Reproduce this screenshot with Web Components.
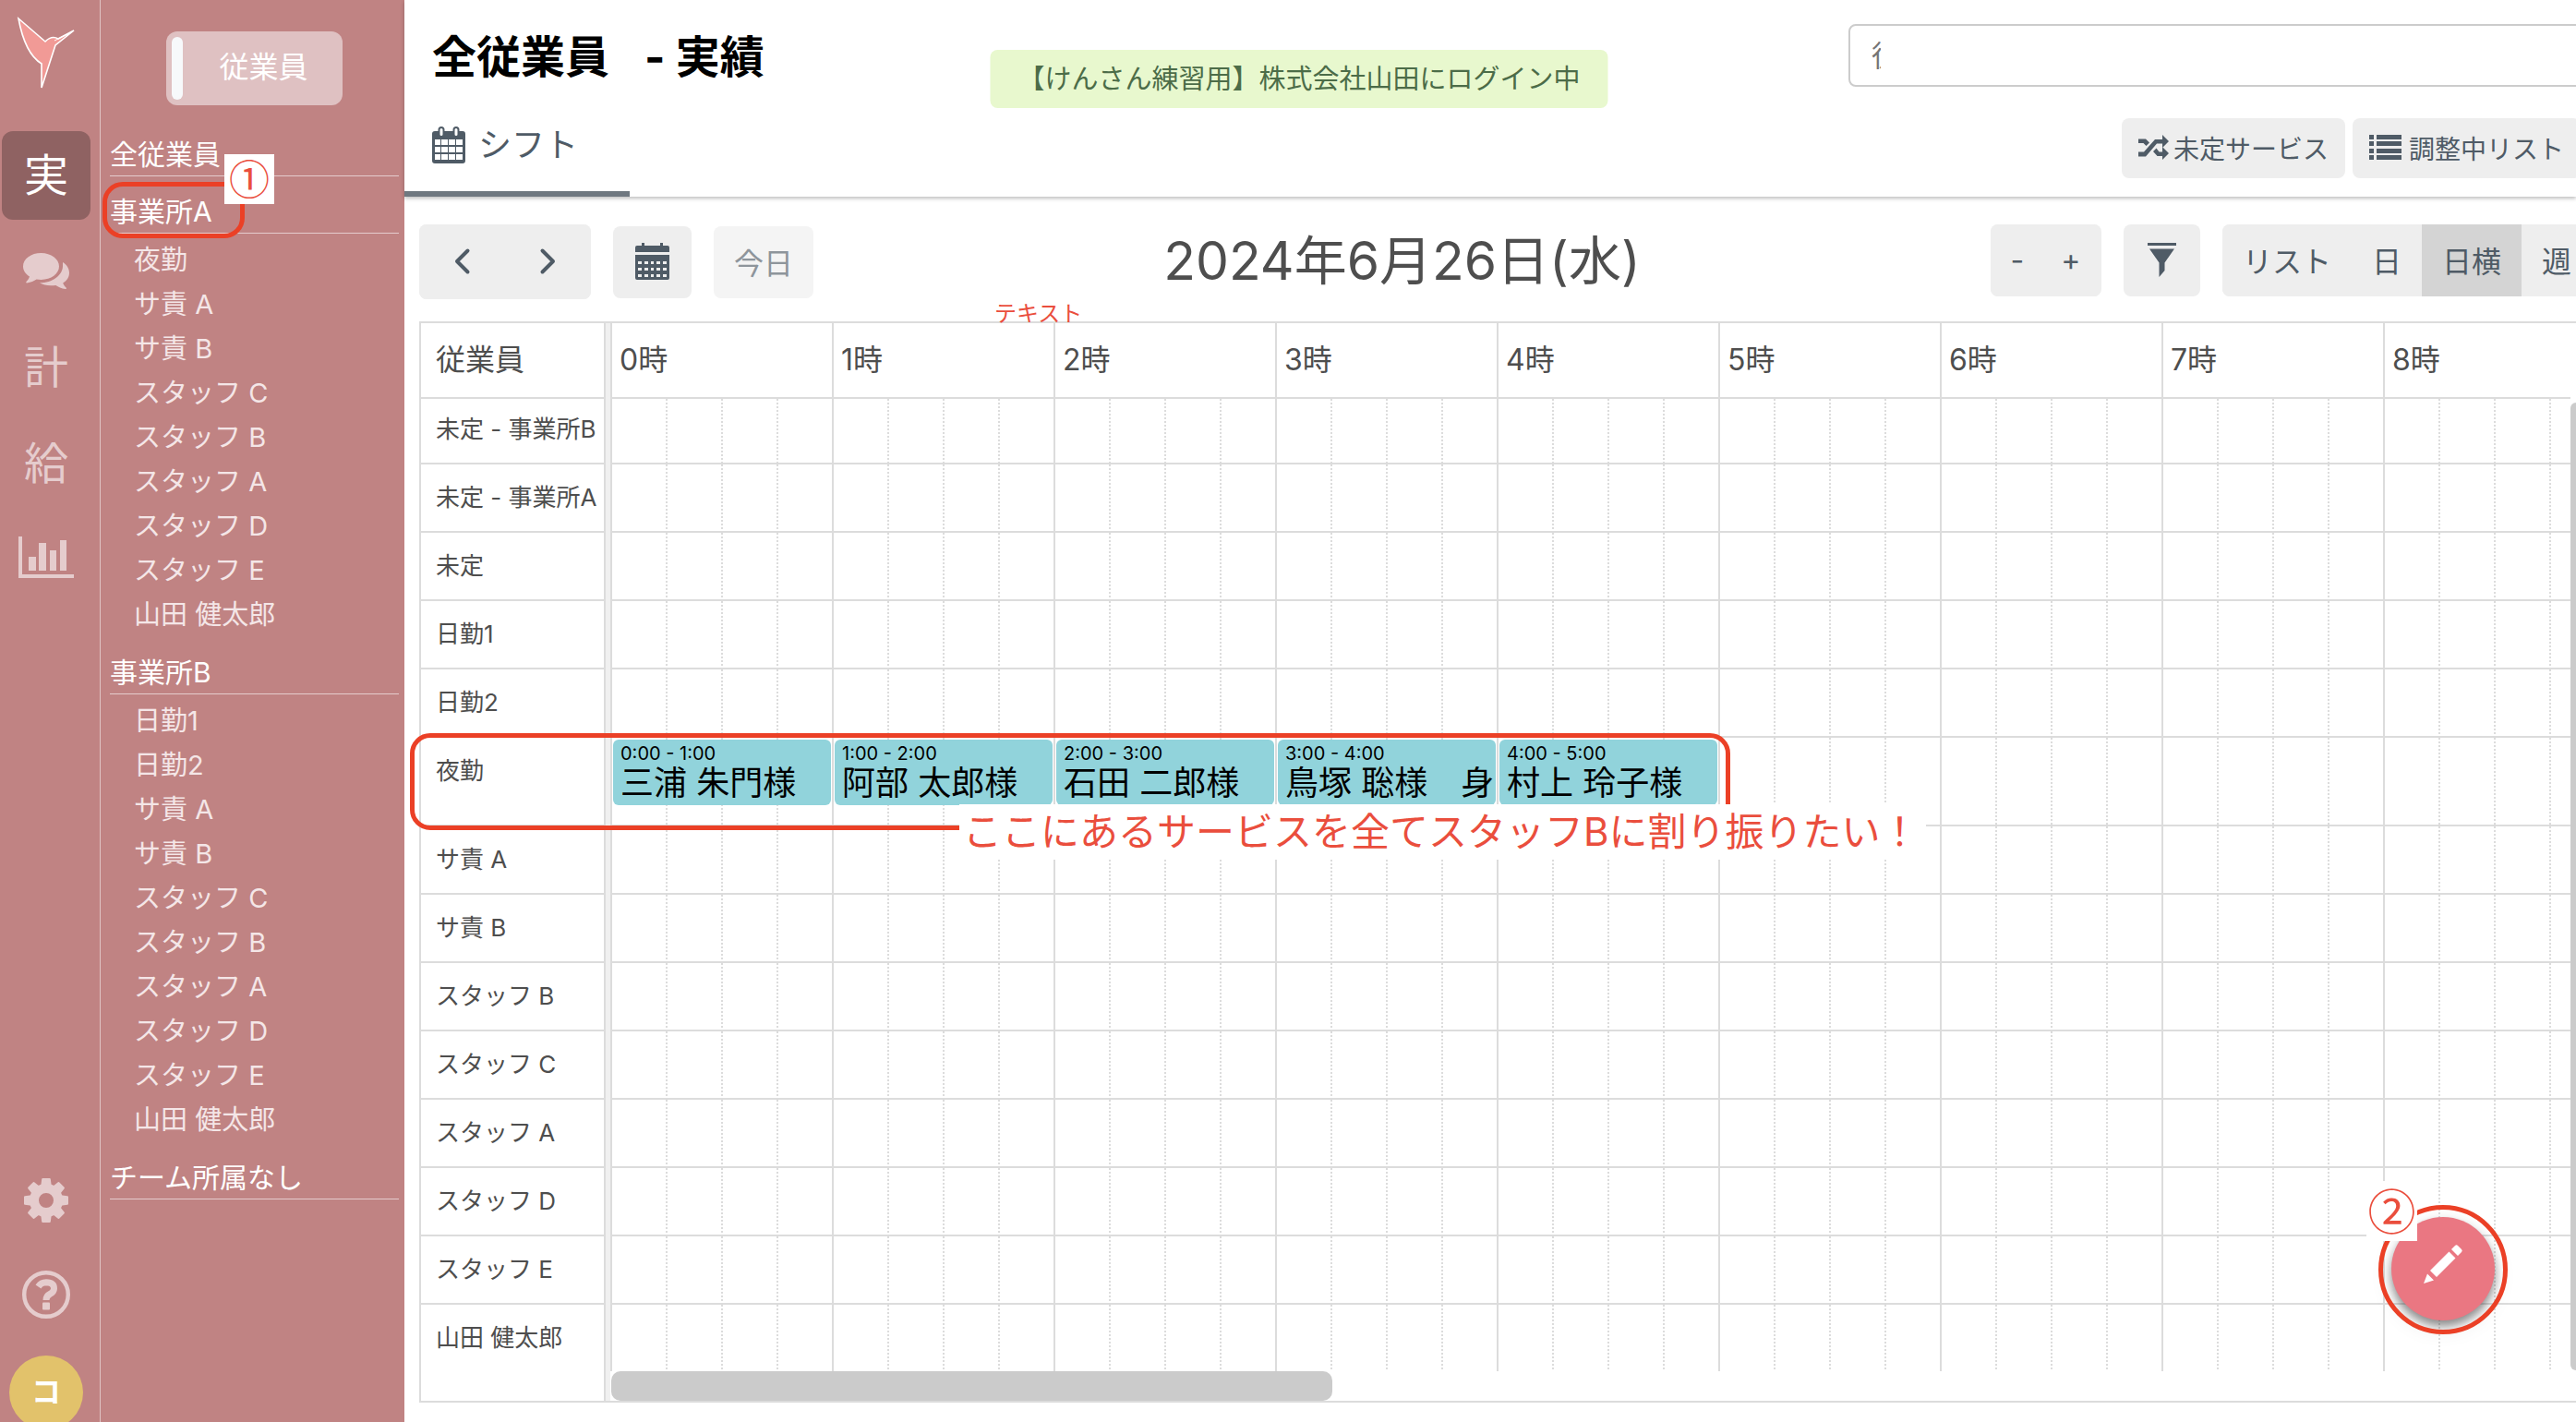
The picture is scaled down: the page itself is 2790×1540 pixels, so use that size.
<!DOCTYPE html>
<html lang="ja">
<head>
<meta charset="utf-8">
<title>全従業員 - 実績</title>
<style>
  html, body { margin: 0; height: 100%; }
  body {
    font-family: Inter, "Noto Sans CJK JP", sans-serif;
    color: #4e4e4e;
    background: #fff;
    overflow: hidden;
    --line: #dcdcdc;
    --btn: #eee;
    --ink: #4f5b66;
    --mark: #eb4026;
    --note: #ea4e3d;
  }
</style>
</head>
<body>
<care-app></care-app>
<script>
const ICONS = {
  bird: ['0 0 62 80', '<path d="M1 2 30 27Q37 20 44 24L61 15 41 31 26 77V51Q8 40 1 2Z" fill="#f19a96" stroke="#fff" stroke-width="1.6"/><path d="M40 26 58 17" stroke="#fff" stroke-width="1"/>'],
  comments: ['0 0 50 40', '<path d="M19.500 0C8.700 0 0 6.300 0 14.500c0 4.600 2.800 8.400 7 11-.6 2.300-1.900 4-3.500 5.600-.6.700-.1 1.400.6 1.300 4.300-.5 7.800-2.100 10.400-3.900 1.600.3 3.300.4 5 .4C30.300 28.900 39 22.500 39 14.500S30.300 0 19.500 0Z"/><path d="M43 10c4.300 2.500 7 6.700 7 11.500 0 4.700-2.800 8.700-6.800 11 .7 2.200 2 3.600 3.400 5.100.7.800.2 1.600-.8 1.500-4.200-.6-7.700-2.300-10.400-4.200-7 1-13.400 0-17.400-2.600C31 32.500 43 24.500 43 14Z"/>'],
  chart: ['0 0 60 50', '<path d="M0 0h4v41h56v4H0ZM11 22h8v15h-8ZM22 7h8v30h-8ZM34 15h7v22h-7ZM45 4h7v33h-7Z"/>'],
  gear: ['0 0 48 48', '<g><circle cx="24" cy="24" r="13" fill="none" stroke="currentColor" stroke-width="10"/>' +
    [0, 45, 90, 135, 180, 225, 270, 315].map(a => `<path d="M17 9 18.500 6.500 19.200 1Q19.300 0 20.300 0h7.400Q28.700 0 28.800 1L29.500 6.500 31 9Z" transform="rotate(${a} 24 24)"/>`).join('') + '</g>'],
  help: ['0 0 52 56', '<circle cx="26" cy="26" r="23.800" fill="none" stroke="currentColor" stroke-width="4.400"/><path d="M17.500 17.500Q20.500 12.800 26 12.800 34.500 13 34.500 19.500 34.500 23 30 25.500 26 27.500 26 32" fill="none" stroke="currentColor" stroke-width="7"/><rect x="22" y="34.500" width="8" height="8" rx="1"/>'],
  calendar: ['0 0 36 40', '<path fill-rule="evenodd" d="M3 5h30q3 0 3 3v29q0 3-3 3H3q-3 0-3-3V8q0-3 3-3ZM3 14v6h6v-6Zm7 0v6h7v-6Zm8 0v6h7v-6Zm8 0v6h7v-6ZM3 22v6h6v-6Zm7 0v6h7v-6Zm8 0v6h7v-6Zm8 0v6h7v-6ZM3 30v6h6v-6Zm7 0v6h7v-6Zm8 0v6h7v-6Zm8 0v6h7v-6Z"/><rect x="7.500" y="1" width="5" height="10" rx="2.500" fill="#fff" stroke="currentColor" stroke-width="2"/><rect x="23.500" y="1" width="5" height="10" rx="2.500" fill="#fff" stroke="currentColor" stroke-width="2"/>'],
  month: ['0 0 37 40', '<path fill-rule="evenodd" d="M7 0h3v3h17V0h3v3h5q2 0 2 2v5H0V5q0-2 2-2h5ZM0 13h37v25q0 2-2 2H2q-2 0-2-2ZM3 20v3h4v-3Zm7 0v3h4v-3Zm7 0v3h3v-3Zm6 0v3h4v-3Zm7 0v3h4v-3ZM3 27v3h4v-3Zm7 0v3h4v-3Zm7 0v3h3v-3Zm6 0v3h4v-3Zm7 0v3h4v-3ZM3 34v3h4v-3Zm7 0v3h4v-3Zm7 0v3h3v-3Zm6 0v3h4v-3Zm7 0v3h4v-3Z"/>'],
  prev: ['0 0 17 28', '<path d="M14.500 2.500 3 14l11.500 11.500" fill="none" stroke="currentColor" stroke-width="4" stroke-linecap="round" stroke-linejoin="round"/>'],
  next: ['0 0 17 28', '<path d="M2.500 2.500 14 14 2.500 25.500" fill="none" stroke="currentColor" stroke-width="4" stroke-linecap="round" stroke-linejoin="round"/>'],
  filter: ['0 0 31 37', '<path d="M0 0h31v3H0ZM2 6.500h27L18.500 21.500V30L12.500 37V21.500Z"/>'],
  shuffle: ['0 0 33 27', '<path d="M0 4.500h8l4 4-3.500 3.500-3-3H0ZM0 18.500h6L18 5h8V0l7 7-7 7V9.500h-6L8 23.500H0ZM16 18l3.500-3.500 3 4H26V13l7 7-7 7v-4h-5.500Z"/>'],
  list: ['0 0 35 27', '<path d="M0 0h5v5H0ZM8 0h27v5H8ZM0 7h5v5H0ZM8 7h27v5H8ZM0 15h5v5H0ZM8 15h27v5H8ZM0 22h5v5H0ZM8 22h27v5H8Z"/>'],
  pencil: ['0 0 42 42', '<path d="M0 42 4 31.500 11 38.500ZM7 28 27.500 7.500 34.500 14.500 14 35ZM30 5 34 1Q35.500-.5 37 1L41 5Q42.500 6.500 41 8L37 12Z"/>']
};

/* Registers an element whose shadow root is cloned from a template. */
function define(name, html, setup) {
  const template = document.createElement('template');
  template.innerHTML = html;
  customElements.define(name, class extends HTMLElement {
    constructor() {
      super();
      this.attachShadow({ mode: 'open' }).append(template.content.cloneNode(true));
    }
    connectedCallback() {
      if (setup && !this.ready) { this.ready = true; setup(this, this.shadowRoot); }
    }
  });
}

define('ui-icon', `<style>
  :host { display: block; flex: none; line-height: 0; }
  svg { display: block; fill: currentColor; overflow: visible; }
</style><span></span>`, (el, root) => {
  const [box, body] = ICONS[el.getAttribute('name')];
  const [, , w, h] = box.split(' ');
  root.querySelector('span').innerHTML = `<svg width="${w}" height="${h}" viewBox="${box}" aria-hidden="true">${body}</svg>`;
});

define('ui-button', `<style>
  :host { display: block; flex: none; }
  button {
    display: flex; align-items: center; justify-content: center; gap: var(--gap, 0);
    box-sizing: border-box; width: 100%; height: var(--h, 78px); margin: 0; padding: 0 var(--pad, 22px) 2px;
    border: 0; border-radius: var(--radius, 8px); background: var(--btn);
    color: var(--ink); font: inherit; font-size: var(--size, 32px); white-space: nowrap;
  }
  :host([active]) button { background: #d4d4d4; }
  :host([disabled]) button { background: #f4f4f4; color: #8e959b; }
</style><button type="button"><slot></slot></button>`, (el, root) => {
  const label = el.getAttribute('label');
  if (label) root.querySelector('button').setAttribute('aria-label', label);
  root.querySelector('button').disabled = el.hasAttribute('disabled');
});

define('ui-button-group', `<style>
  :host { display: flex; flex: none; overflow: hidden; border-radius: 8px; background: var(--btn); --radius: 0; }
</style><slot></slot>`);

define('rail-item', `<style>
  :host { display: block; }
  a {
    display: flex; align-items: center; justify-content: center; width: 96px; height: 96px;
    border-radius: 12px; color: #e5cccd; font-size: 48px; line-height: 96px; text-decoration: none;
  }
  :host([active]) a { background: #8f6262; color: #fff; }
</style><a href="#"><slot></slot></a>`);

define('nav-rail', `<style>
  :host { display: flex; flex-direction: column; flex: none; gap: 8px; width: 106px; padding: 18px 0 0 2px; border-right: 1px solid #e0c4c4; }
  .logo { padding-left: 17px; height: 116px; }
  .space { flex: 1; }
  .avatar {
    flex: none; width: 80px; height: 80px; margin: 8px 0 -8px 8px; padding: 0; border: 0; border-radius: 50%;
    background: #e2c26b; color: #fff; font: inherit; font-size: 32px; font-weight: 700; line-height: 80px;
  }
</style>
<div class="logo"><ui-icon name="bird"></ui-icon></div>
<rail-item active>実</rail-item>
<rail-item><ui-icon name="comments"></ui-icon></rail-item>
<rail-item>計</rail-item>
<rail-item>給</rail-item>
<rail-item><ui-icon name="chart"></ui-icon></rail-item>
<div class="space"></div>
<rail-item><ui-icon name="gear"></ui-icon></rail-item>
<rail-item><ui-icon name="help"></ui-icon></rail-item>
<button class="avatar" type="button">コ</button>`);

define('staff-group', `<style>
  :host { display: block; }
  h2 { margin: 0; padding: 16px 0 1px; border-bottom: 1px solid #e5cccd; font-size: 30px; font-weight: 400; line-height: 44px; }
  ul { margin: 0; padding: 5px 0 0 26px; list-style: none; }
  li { font-size: 29px; line-height: 48px; }
  a { color: #fff; text-decoration: none; }
  li a { color: #f4e6e7; }
</style><h2><a href="#"></a></h2>`, (el, root) => {
  root.querySelector('h2 a').textContent = el.getAttribute('name');
  const members = el.getAttribute('members');
  if (!members) return;
  const ul = document.createElement('ul');
  for (const m of members.split(',')) {
    const li = document.createElement('li'), a = document.createElement('a');
    a.href = '#'; a.textContent = m; li.append(a); ul.append(li);
  }
  root.append(ul);
});

define('staff-panel', `<style>
  :host { display: block; flex: none; box-sizing: border-box; width: 329px; padding: 34px 6px 0 10px; }
  .switch {
    display: flex; align-items: center; width: 191px; height: 80px; margin: 0 0 15px 61px; padding: 0 0 0 6px;
    border: 0; border-radius: 12px; background: #dfc1c2; color: #fff; font: inherit; font-size: 32px; line-height: 76px;
  }
  .switch i { width: 12px; height: 68px; border-radius: 6px; background: #f7f9fb; }
  .switch span { flex: 1; text-align: center; padding: 0 0 2px 2px; }
</style>
<button class="switch" type="button"><i></i><span>従業員</span></button>
<staff-group name="全従業員"></staff-group>
<staff-group name="事業所A" members="夜勤,サ責 A,サ責 B,スタッフ C,スタッフ B,スタッフ A,スタッフ D,スタッフ E,山田 健太郎"></staff-group>
<staff-group name="事業所B" members="日勤1,日勤2,サ責 A,サ責 B,スタッフ C,スタッフ B,スタッフ A,スタッフ D,スタッフ E,山田 健太郎"></staff-group>
<staff-group name="チーム所属なし"></staff-group>`);

define('staff-search', `<style>
  :host { display: block; }
  label { display: flex; box-sizing: border-box; height: 68px; padding-left: 23px; border: 2px solid #ccc; border-radius: 8px; }
  input { width: 10px; height: 64px; padding: 0; border: 0; outline: 0; background: none; font: inherit; font-size: 32px; }
  input::placeholder { color: #757575; opacity: 1; }
</style><label><input type="text" placeholder="従" aria-label="従業員検索"></label>`);

define('page-header', `<style>
  :host { display: block; box-shadow: 0 2px 4px rgba(0,0,0,.26); }
  .top { display: flex; justify-content: space-between; height: 120px; padding-left: 30px; }
  h1 { display: flex; gap: 38px; margin: 0; padding-top: 32px; color: #000; font-size: 48px; font-weight: 700; line-height: 60px; }
  staff-search { width: 812px; margin: 26px -24px 0 0; }
  .bottom { display: flex; justify-content: space-between; height: 93px; }
  .tab {
    display: flex; align-items: center; gap: 14px; box-sizing: border-box; width: 244px; padding: 0 0 14px 30px;
    border-bottom: 6px solid #6f7880; color: var(--ink); font-size: 36px; line-height: 72px; text-decoration: none;
  }
  .actions { display: flex; gap: 8px; margin: 8px -5px 0 0; --h: 65px; --size: 28px; --pad: 18px; }
  .wide { --gap: 8px; }
  .tight { --gap: 5px; }
</style>
<div class="top"><h1><span>全従業員</span><span>- 実績</span></h1><staff-search></staff-search></div>
<div class="bottom">
  <a class="tab" href="#"><ui-icon name="calendar"></ui-icon>シフト</a>
  <div class="actions">
    <ui-button class="tight"><ui-icon name="shuffle"></ui-icon>未定サービス</ui-button>
    <ui-button class="wide"><ui-icon name="list"></ui-icon>調整中リスト</ui-button>
  </div>
</div>`);

define('shift-toolbar', `<style>
  :host { display: flex; justify-content: space-between; align-items: flex-start; height: 105px; padding: 30px 0 0 16px; }
  .side { display: flex; align-items: center; gap: 24px; }
  .right { margin-right: -17px; }
  .nav { --h: 81px; --pad: 38px; }
  .month { --pad: 24px; }
  h2 { margin: 0; font-size: 57px; font-weight: 400; line-height: 80px; }
  .zoom { --pad: 0; padding-right: 4px; }
  .zoom ui-button { width: 58px; }
  .filter { --pad: 26px; }
</style>
<div class="side">
  <ui-button-group class="nav">
    <ui-button label="前の日"><ui-icon name="prev"></ui-icon></ui-button>
    <ui-button label="次の日"><ui-icon name="next"></ui-icon></ui-button>
  </ui-button-group>
  <ui-button class="month" label="日付を選択"><ui-icon name="month"></ui-icon></ui-button>
  <ui-button disabled>今日</ui-button>
</div>
<h2>2024年6月26日(水)</h2>
<div class="side right">
  <ui-button-group class="zoom"><ui-button>-</ui-button><ui-button>+</ui-button></ui-button-group>
  <ui-button class="filter" label="絞り込み"><ui-icon name="filter"></ui-icon></ui-button>
  <ui-button-group>
    <ui-button>リスト</ui-button><ui-button>日</ui-button><ui-button active>日横</ui-button><ui-button>週</ui-button>
  </ui-button-group>
</div>`);

define('shift-event', `<style>
  :host { display: block; margin: 2px 1px 0; }
  button {
    display: block; width: 100%; height: 71px; margin: 0; padding: 2px 0 0 8px; overflow: hidden;
    border: 0; border-radius: 6px; background: #91d3db; color: #000; font: inherit; text-align: left; white-space: nowrap;
  }
  time { display: block; font-size: 20px; line-height: 24px; }
  span { display: block; height: 43px; font-size: 36px; line-height: 40px; }
</style><button type="button"><time></time><span><slot></slot></span></button>`, (el, root) => {
  root.querySelector('time').textContent = el.getAttribute('time');
});

define('shift-table', `<style>
  :host { display: flex; margin-left: 16px; border: 2px solid var(--line); border-right: 0; }
  .scroll { flex: 1; min-width: 0; overflow: hidden; }
  table { width: 2365px; border-spacing: 0; table-layout: fixed; }
  .name { width: 200px; }
  .gap { width: 5px; }
  th, td { padding: 0; font-weight: 400; text-align: left; vertical-align: top; box-sizing: border-box; }
  thead th { height: 82px; padding-left: 8px; border-bottom: 2px solid var(--line); border-left: 2px solid var(--line); font-size: 32px; line-height: 80px; }
  th.staff { padding-left: 16px; border-left: 0; border-right: 2px solid var(--line); }
  thead .bar, .bar { padding: 0; border: 0; background: #f0f0f0; }
  tbody th { height: 74px; padding-top: 18px; border-bottom: 2px solid var(--line); font-size: 26px; line-height: 36px; white-space: nowrap; }
  tbody td {
    border-bottom: 2px solid var(--line); border-left: 2px solid var(--line);
    --dots: linear-gradient(var(--line) 50%, transparent 50%);
    background: var(--dots) 58px 0 / 2px 4px repeat-y, var(--dots) 118px 0 / 2px 4px repeat-y, var(--dots) 178px 0 / 2px 4px repeat-y;
  }
  tbody td.bar { border: 0; background: #f0f0f0; }
  tbody tr:first-child th { height: 71px; padding-top: 15px; }
  tbody tr.tall th { height: 96px; }
  tbody tr:last-child th { height: 72px; }
  tbody tr:last-child > * { border-bottom: 0; }
  tfoot td { height: 32px; }
  tfoot .staff { border-right: 2px solid var(--line); }
  .hthumb { width: 781px; height: 32px; margin-left: 1px; border-radius: 10px; background: #cbcbcb; }
  .vthumb { flex: none; width: 6px; margin: 86px 0 33px; border-radius: 10px 0 0 10px; background: #cbcbcb; }
</style>
<div class="scroll"><table>
  <colgroup><col class="name"><col class="gap"></colgroup>
  <thead><tr><th class="staff" scope="col">従業員</th><td class="bar"></td></tr></thead>
  <tbody></tbody>
  <tfoot><tr><td class="staff"></td><td class="bar"></td><td colspan="9"><div class="hthumb"></div></td></tr></tfoot>
</table></div>
<div class="vthumb"></div>`, (el, root) => {
  const hours = [0, 1, 2, 3, 4, 5, 6, 7, 8];
  const staff = ['未定 - 事業所B', '未定 - 事業所A', '未定', '日勤1', '日勤2', '夜勤', 'サ責 A', 'サ責 B',
    'スタッフ B', 'スタッフ C', 'スタッフ A', 'スタッフ D', 'スタッフ E', '山田 健太郎'];
  const events = { '夜勤': ['三浦 朱門様', '阿部 太郎様', '石田 二郎様', '鳥塚 聡様　身', '村上 玲子様'] };
  root.querySelector('thead tr').insertAdjacentHTML('beforeend', hours.map(h => `<th scope="col">${h}時</th>`).join(''));
  root.querySelector('colgroup').insertAdjacentHTML('beforeend', hours.map(() => '<col style="width:240px">').join(''));
  root.querySelector('tbody').innerHTML = staff.map(s => {
    const mine = events[s] || [];
    const cells = hours.map(h => `<td>${mine[h] ? `<shift-event time="${h}:00 - ${h + 1}:00">${mine[h]}</shift-event>` : ''}</td>`).join('');
    return `<tr class="${mine.length ? 'tall' : ''}"><th class="staff" scope="row">${s}</th><td class="bar"></td>${cells}</tr>`;
  }).join('');
});

define('login-toast', `<style>
  :host {
    position: absolute; top: 54px; left: calc(50% + 12px); transform: translateX(-50%);
    padding: 1px 30px 0; border-radius: 8px; background: #e8f8ce; color: #4c6c48;
    font-size: 29px; line-height: 62px; white-space: nowrap;
  }
</style><slot></slot>`);

define('edit-fab', `<style>
  :host { position: absolute; right: 88px; bottom: 110px; }
  button {
    display: flex; align-items: center; justify-content: center; width: 112px; height: 112px; padding: 0 0 10px; border: 0;
    box-sizing: border-box; border-radius: 50%; background: #ea7782; color: #fff; box-shadow: 0 6px 10px rgba(0,0,0,.4), 0 8px 24px rgba(0,0,0,.1);
  }
</style><button type="button" aria-label="編集"><ui-icon name="pencil"></ui-icon></button>`);

/* Hand-placed marks on top of the screen: outlines and captions. */
define('mark-frame', `<style>
  :host { position: absolute; box-sizing: border-box; border: 5px solid var(--mark); border-radius: 22px; pointer-events: none; }
</style>`);
define('mark-note', `<style>
  :host { position: absolute; color: var(--note); white-space: nowrap; }
</style><slot></slot>`);

define('care-app', `<style>
  :host { position: relative; display: flex; height: 100vh; overflow: hidden; }
  .side { display: flex; flex: none; background: #c08383; color: #fff; }
  main { flex: 1; min-width: 0; }
  .team { left: 111px; top: 197px; width: 154px; height: 61px; }
  .shifts { left: 444px; top: 794px; width: 1430px; height: 105px; }
  .fab { right: 74px; bottom: 95px; width: 140px; height: 140px; border-radius: 50%; }
  .no { background: #fff; font-family: "Noto Sans CJK JP", sans-serif; text-align: center; }
  .one { left: 243px; top: 167px; width: 54px; padding-bottom: 4px; font-size: 44px; line-height: 50px; }
  .two { left: 2563px; top: 1279px; width: 55px; padding-bottom: 4px; font-size: 52px; line-height: 61px; }
  .wish { left: 1039px; top: 871px; padding: 0 8px 0 4px; background: #fff; font-size: 42px; line-height: 60px; }
  .text { left: 1077px; top: 324px; font-size: 24px; line-height: 32px; }
</style>
<div class="side"><nav-rail></nav-rail><staff-panel></staff-panel></div>
<main>
  <page-header></page-header>
  <shift-toolbar></shift-toolbar>
  <shift-table></shift-table>
</main>
<login-toast>【けんさん練習用】株式会社山田にログイン中</login-toast>
<edit-fab></edit-fab>
<mark-frame class="team"></mark-frame>
<mark-frame class="shifts"></mark-frame>
<mark-frame class="fab"></mark-frame>
<mark-note class="no one">①</mark-note>
<mark-note class="no two">②</mark-note>
<mark-note class="wish">ここにあるサービスを全てスタッフBに割り振りたい！</mark-note>
<mark-note class="text">テキスト</mark-note>`);
</script>
</body>
</html>
